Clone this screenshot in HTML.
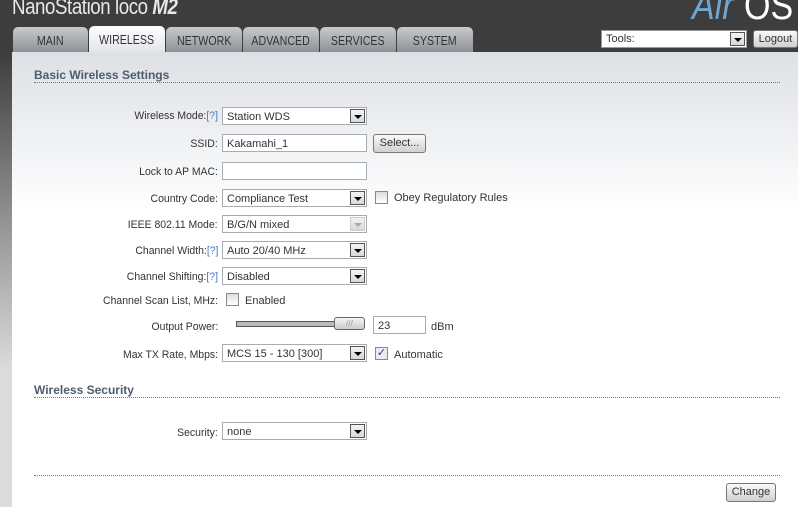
<!DOCTYPE html>
<html><head><meta charset="utf-8"><style>
*{box-sizing:border-box;margin:0;padding:0}
body{width:798px;height:507px;overflow:hidden;font-family:"Liberation Sans",sans-serif;font-size:11px;color:#333;background:#fff;position:relative}
#hdr{position:absolute;left:0;top:0;width:798px;height:52px;background:#3d3d3d}
#left{position:absolute;left:0;top:52px;width:12px;height:455px;background:linear-gradient(#3d3d3d,#999 40%,#dcdcdc 70%,#dcdcdc)}
#panel{position:absolute;left:12px;top:52px;width:786px;height:455px;background:linear-gradient(#dde0e5,#fff 160px)}
.logo{position:absolute;left:12px;top:-6px;color:#e8e8e8;font-size:22px;letter-spacing:-0.5px;transform:scaleX(.85);transform-origin:left;white-space:nowrap}
.air{position:absolute;left:692px;top:-16px;font-size:40px;font-style:italic;color:#6fa7d0;transform:scaleX(.85);transform-origin:left}
.os{position:absolute;left:744px;top:-16px;font-size:40px;color:#fff;transform:scaleX(.85);transform-origin:left}
.tab{position:absolute;top:27px;height:25px;background:linear-gradient(#c8cacd,#8e9196);border-radius:5px 5px 0 0;color:#333;text-align:center;line-height:27px}
.tab span{display:inline-block;font-size:13px;transform:scaleX(.82)}
.tab.act{background:linear-gradient(#fff,#e2e4e8);top:26px;height:27px}
.lbl{position:absolute;right:580px;text-align:right;white-space:nowrap;font-size:11px;transform:scaleX(.95);transform-origin:right}
.q{color:#4a7bbd}
.sel,.inp{position:absolute;height:18px;background:#fff;border:1px solid #a5acb2;padding:3px 0 0 4px;white-space:nowrap}
.sel .ar{position:absolute;right:1px;top:1px;width:15px;height:14px;background:linear-gradient(#f4f4f4,#d8d8d8);border:1px solid #555;}
.sel .ar:after{content:"";position:absolute;left:3px;top:5px;border-left:4px solid transparent;border-right:4px solid transparent;border-top:4px solid #000}
.sel.dis .ar{border-color:#ccc}.sel.dis .ar:after{border-top-color:#aaa}
.cb{position:absolute;width:13px;height:13px;border:1px solid #888;background:linear-gradient(#ddd,#fff)}
.h{position:absolute;left:34px;font-weight:bold;font-size:12px;color:#4e5c6e}
.line{position:absolute;left:34px;width:746px;border-top:1px dotted #777}
.btn{position:absolute;height:19px;border:1px solid #777;border-radius:3px;background:linear-gradient(#fafafa,#d0d0d0);text-align:center;line-height:17px}
</style></head><body>
<div id="hdr">
<div class="logo">NanoStation <span style="font-weight:300">loco</span> <b><i>M2</i></b></div>
<div class="air">Air</div><div class="os">OS</div>
<div class="tab" style="left:13px;width:75px"><span>MAIN</span></div>
<div class="tab act" style="left:89px;width:76px"><span>WIRELESS</span></div>
<div class="tab" style="left:166px;width:76px"><span>NETWORK</span></div>
<div class="tab" style="left:243px;width:76px"><span>ADVANCED</span></div>
<div class="tab" style="left:320px;width:76px"><span>SERVICES</span></div>
<div class="tab" style="left:397px;width:76px"><span>SYSTEM</span></div>
<div class="sel" style="left:601px;top:30px;width:146px;height:18px;border-color:#999;padding-top:2px">Tools:<span class="ar"></span></div>
<div class="btn" style="left:753px;top:30px;width:45px;height:18px;color:#333">Logout</div>
</div>
<div id="left"></div>
<div id="panel"></div>
<div class="h" style="top:68px">Basic Wireless Settings</div>
<div class="line" style="top:82px"></div>

<div class="lbl" style="top:110px">Wireless Mode:<span class="q">[?]</span></div>
<div class="sel" style="left:222px;top:107px;width:145px">Station WDS<span class="ar"></span></div>
<div class="lbl" style="top:138px">SSID:</div>
<div class="inp" style="left:222px;top:134px;width:145px">Kakamahi_1</div>
<div class="btn" style="left:373px;top:134px;width:53px">Select...</div>
<div class="lbl" style="top:166px">Lock to AP MAC:</div>
<div class="inp" style="left:222px;top:162px;width:145px"></div>
<div class="lbl" style="top:193px">Country Code:</div>
<div class="sel" style="left:222px;top:189px;width:145px">Compliance Test<span class="ar"></span></div>
<div class="cb" style="left:375px;top:191px"></div><div style="position:absolute;left:394px;top:192px">Obey Regulatory Rules</div>
<div class="lbl" style="top:219px">IEEE 802.11 Mode:</div>
<div class="sel dis" style="left:222px;top:215px;width:145px">B/G/N mixed<span class="ar"></span></div>
<div class="lbl" style="top:245px">Channel Width:<span class="q">[?]</span></div>
<div class="sel" style="left:222px;top:241px;width:145px">Auto 20/40 MHz<span class="ar"></span></div>
<div class="lbl" style="top:271px">Channel Shifting:<span class="q">[?]</span></div>
<div class="sel" style="left:222px;top:267px;width:145px">Disabled<span class="ar"></span></div>
<div class="lbl" style="top:295px">Channel Scan List, MHz:</div>
<div class="cb" style="left:226px;top:293px"></div><div style="position:absolute;left:245px;top:295px">Enabled</div>
<div class="lbl" style="top:321px">Output Power:</div>
<div style="position:absolute;left:236px;top:321px;width:100px;height:6px;background:#b8bcb8;border:1px solid #555"></div>
<div style="position:absolute;left:334px;top:317px;width:31px;height:13px;border:1px solid #666;border-radius:3px;background:linear-gradient(#f4f4f4,#ccc);font-size:8px;color:#999;text-align:center;line-height:11px">///</div>
<div class="inp" style="left:373px;top:316px;width:53px">23</div>
<div style="position:absolute;left:431px;top:321px">dBm</div>
<div class="lbl" style="top:349px">Max TX Rate, Mbps:</div>
<div class="sel" style="left:222px;top:344px;width:145px">MCS 15 - 130 [300]<span class="ar"></span></div>
<div class="cb" style="left:375px;top:347px;background:#e8ecf4;color:#2a3a8a;font-size:11px;line-height:11px;text-align:center">✓</div><div style="position:absolute;left:394px;top:349px">Automatic</div>

<div class="h" style="top:383px">Wireless Security</div>
<div class="line" style="top:397px"></div>
<div class="lbl" style="top:427px">Security:</div>
<div class="sel" style="left:222px;top:422px;width:145px">none<span class="ar"></span></div>
<div class="line" style="top:475px"></div>
<div class="btn" style="left:726px;top:483px;width:50px">Change</div>
</body></html>
